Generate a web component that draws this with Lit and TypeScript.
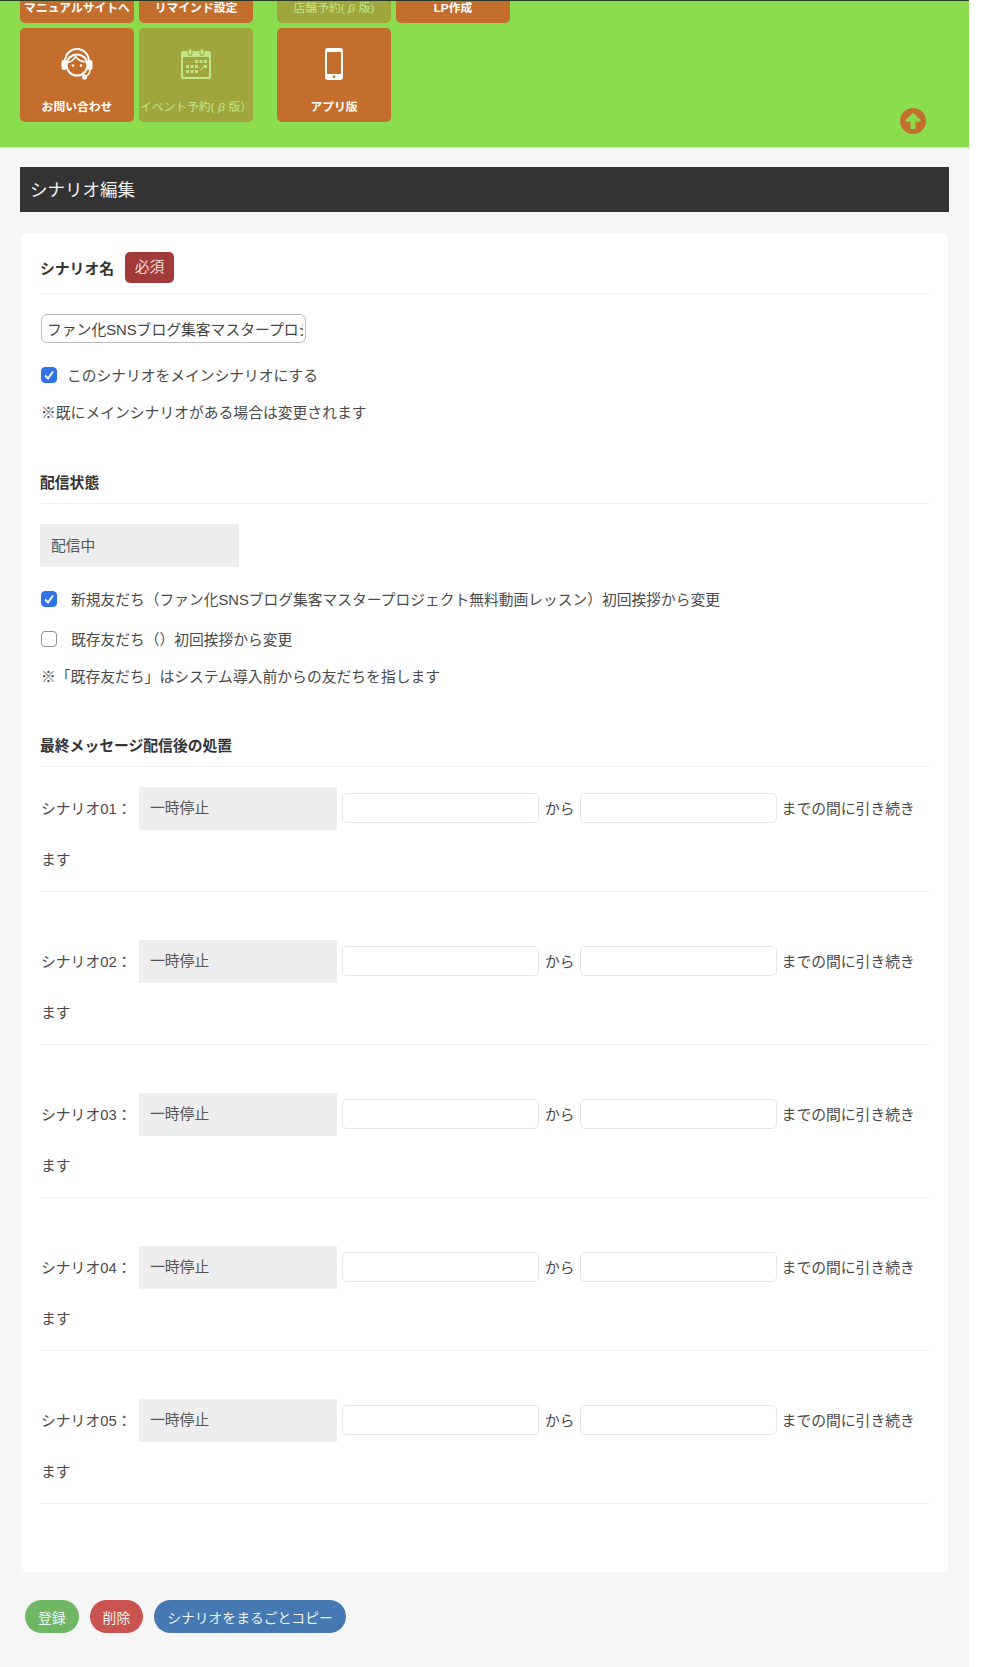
import { LitElement, html, css, svg } from "lit";
import { customElement } from "lit/decorators.js";

const headset = html`<svg class="ic" width="33" height="32" viewBox="0 0 33 32" fill="none" stroke="currentColor">
  <path d="M4.5 14 C4.5 6 10 1 16.5 1 S28.5 6 28.5 14" stroke-width="2"/>
  <circle cx="16.5" cy="17" r="10.5" stroke-width="2"/>
  <path d="M7.5 14.5 C11 13.5 13.5 11.5 15 8.5 C17 11.5 21 13.5 25.5 14" stroke-width="1.6"/>
  <rect x="1" y="12" width="5" height="10" rx="2.2" fill="currentColor" stroke="none"/>
  <rect x="27" y="12" width="5" height="10" rx="2.2" fill="currentColor" stroke="none"/>
  <circle cx="12.5" cy="17.5" r="1.2" fill="currentColor" stroke="none"/>
  <circle cx="20.5" cy="17.5" r="1.2" fill="currentColor" stroke="none"/>
  <path d="M29.5 22 C29 26 27 28 24 29" stroke-width="1.6"/>
  <circle cx="24" cy="29" r="2.6" fill="currentColor" stroke="none"/>
</svg>`;

const cells: [number, number][] = [
  [15, 12], [19.5, 12], [24, 12],
  [6, 17], [10.5, 17], [15, 17], [24, 17],
  [6, 22], [10.5, 22], [15, 22],
];
const calendar = html`<svg class="ic" width="32" height="32" viewBox="0 0 32 32">
  <path fill="currentColor" fill-rule="evenodd" d="M3 3 H28 Q31 3 31 6 V29 Q31 31 28 31 H3 Q1 31 1 29 V6 Q1 3 3 3 Z M3 9 V28 Q3 29 4 29 H28 Q29 29 29 28 V9 Z"/>
  <rect x="8" y="0.5" width="4" height="7" rx="2" fill="currentColor" stroke="#a0a53c"/>
  <rect x="20" y="0.5" width="4" height="7" rx="2" fill="currentColor" stroke="#a0a53c"/>
  ${cells.map(([x, y]) => svg`<rect x=${x} y=${y} width="3" height="3" fill="currentColor"/>`)}
  <path d="M19.5 19 L21 20.5 L24 16" transform="translate(0 1.5)" fill="none" stroke="currentColor" stroke-width="1"/>
</svg>`;

const phone = html`<svg class="ic" width="18" height="32" viewBox="0 0 18 32">
  <path fill="currentColor" fill-rule="evenodd" d="M3 0 H15 Q18 0 18 3 V29 Q18 32 15 32 H3 Q0 32 0 29 V3 Q0 0 3 0 Z M2 4 V26 H16 V4 Z M9 27.3 A1.3 1.3 0 1 0 9 30 A1.3 1.3 0 1 0 9 27.3 Z"/>
</svg>`;

type Tile = { label: unknown; off?: boolean; icon?: unknown };
const groupA: Tile[] = [
  { label: "マニュアルサイトへ" },
  { label: "リマインド設定" },
  { label: "お問い合わせ", icon: headset },
  { label: html`イベント予約(<i>β</i>版）`, off: true, icon: calendar },
];
const groupB: Tile[] = [
  { label: html`店舗予約(<i>β</i>版)`, off: true },
  { label: "LP作成" },
  { label: "アプリ版", icon: phone },
];

@customElement("app-root")
export class AppRoot extends LitElement {
  static styles = css`
    :host {
      display: block;
      width: 969px;
      background: #f6f6f7;
      font-family: "Liberation Sans", "Noto Sans CJK JP", sans-serif;
      font-size: 14.8px;
      color: #4a4a4a;
      height: 1667px;
      overflow: hidden;
    }
    * { box-sizing: border-box; }
    .top {
      position: relative;
      height: 147px;
      background: #8bdd4d;
      border-top: 1px solid #2a3a22;
      box-shadow: 0 1px 1px #d8e8cc;
      overflow: hidden;
      display: flex;
      align-items: flex-end;
      padding: 0 0 25px 20px;
      gap: 24px;
    }
    .group {
      display: grid;
      grid-template-columns: 114px 114px;
      grid-auto-rows: 94px;
      gap: 5px;
    }
    .tile {
      display: flex;
      flex-direction: column;
      align-items: center;
      justify-content: flex-end;
      position: relative;
      background: #c46e2e;
      color: #fff;
      border-radius: 5px;
      font-size: 11.8px;
      font-weight: bold;
      line-height: 16px;
      padding-bottom: 7px;
      white-space: nowrap;
      overflow: hidden;
    }
    .tile.off {
      background: #a0a53c;
      color: #bfe78a;
      font-weight: normal;
    }
    .tile i {
      display: inline-block;
      width: 14px;
      text-align: center;
    }
    .tile .ic {
      position: absolute;
      top: 20px;
      left: 50%;
      transform: translateX(-50%);
    }
    .up {
      position: absolute;
      left: 900px;
      top: 107px;
    }
    main { padding: 20px 20px 0; }
    h1 {
      margin: 0;
      height: 45px;
      background: #333;
      color: #f2f2f2;
      font-size: 17.5px;
      font-weight: normal;
      line-height: 47px;
      padding-left: 10px;
    }
    .card {
      margin: 21px 1px 0;
      height: 1339px;
      background: #fff;
      border-radius: 5px;
      box-shadow: 0 0 2px rgba(0, 0, 0, 0.06);
      padding: 0 19px;
    }
    .head {
      border-bottom: 1px solid #efefef;
      font-weight: bold;
      color: #333;
      line-height: 20px;
      padding-bottom: 10px;
    }
    .head.first {
      display: flex;
      align-items: center;
      padding-top: 19px;
    }
    .head.first .title { margin-top: 2px; }
    .sec2 { margin-top: 48px; }
    .sec3 { margin-top: 47px; }
    .badge {
      margin-left: 11px;
      width: 49px;
      height: 31px;
      line-height: 31px;
      text-align: center;
      background: #a33a3a;
      color: #f6dcdc;
      border-radius: 5px;
      font-weight: normal;
    }
    .name {
      display: block;
      margin: 20px 0 20px 1px;
      width: 265px;
      height: 29px;
      border: 1px solid #b9b9b9;
      border-radius: 6px;
      padding: 0 2px 0 5px;
      font: inherit;
      color: #444;
      background: #fff;
      outline: none;
    }
    .check {
      display: flex;
      align-items: center;
      height: 24px;
      padding-left: 1px;
    }
    .check input {
      appearance: none;
      margin: 0;
      width: 16px;
      height: 16px;
      flex: none;
      border: 1px solid #8f8f8f;
      border-radius: 4px;
      background: #fff center / 12px 12px no-repeat;
    }
    .check input:checked {
      border-color: #2f73e6;
      background-color: #2f73e6;
      background-image: url("data:image/svg+xml,%3Csvg xmlns='http://www.w3.org/2000/svg' viewBox='0 0 12 12'%3E%3Cpath d='M2 6.5 L5 9.5 L10 2.5' fill='none' stroke='white' stroke-width='2'/%3E%3C/svg%3E");
    }
    .check span { margin: 0 0 2px 14px; white-space: nowrap; font-size: 14.75px; }
    .check.tight span { margin-left: 10px; }
    .note { height: 24px; line-height: 24px; padding-left: 1px; white-space: nowrap; }
    .note.a { margin-top: 14px; }
    .note.b { margin-top: 14px; }
    .state {
      appearance: none;
      display: block;
      margin: 20px 0 20px;
      width: 199px;
      height: 43px;
      border: 0;
      border-radius: 0;
      background: #eeeeee;
      color: #555;
      font: inherit;
      padding: 0 11px;
      opacity: 1;
    }
    .gap16 { margin-top: 16px; }
    .rule {
      padding: 45px 0 5px 1px;
      line-height: 51px;
      border-bottom: 1px solid #efefef;
    }
    .rule.first { padding-top: 17px; }
    .rule .lab { display: inline-block; width: 98px; white-space: nowrap; }
    .rule select {
      appearance: none;
      display: inline-block;
      vertical-align: middle;
      width: 198px;
      height: 43px;
      margin-bottom: 4px;
      border: 0;
      border-radius: 0;
      background: #eeeeee;
      color: #555;
      font: inherit;
      line-height: 43px;
      padding: 0 11px;
      opacity: 1;
    }
    .rule input {
      display: inline-block;
      vertical-align: middle;
      width: 197px;
      height: 30px;
      border: 1px solid #e6e6e6;
      border-radius: 5px;
      background: #fff;
      margin: 0 5px 4px;
      outline: none;
    }
    .rule .kara { margin-left: 1px; margin-right: 0; }
    .actions {
      display: flex;
      gap: 11px;
      margin: 28px 0 0 5px;
    }
    .btn {
      appearance: none;
      border: 0;
      height: 33px;
      border-radius: 17px;
      padding: 0 13px;
      font: inherit;
      font-size: 13.8px;
      color: #eef3ee;
      white-space: nowrap;
    }
    .ok { background: #6fb765; }
    .del { background: #c9544f; }
    .copy { background: #4679b4; }
  `;

  private tile(t: Tile) {
    return html`<div class="tile ${t.off ? "off" : ""}">${t.icon ?? ""}<span>${t.label}</span></div>`;
  }

  private rule(n: number) {
    return html`<div class="rule ${n === 1 ? "first" : ""}"><span class="lab">シナリオ0${n}：</span><select disabled><option>一時停止</option></select><input type="text" /><span class="kara">から</span><input type="text" /><span>までの間に引き続き</span><br /><span>ます</span></div>`;
  }

  render() {
    return html`
      <header class="top">
        <div class="group">${groupA.map((t) => this.tile(t))}</div>
        <div class="group">${groupB.map((t) => this.tile(t))}</div>
        <svg class="up" width="26" height="26" viewBox="0 0 26 26">
          <circle cx="13" cy="13" r="13" fill="#c46e2e" />
          <path d="M13 4.5 L21 12.5 L17.5 14.5 L15.5 12.5 V21 H10.5 V12.5 L8.5 14.5 L5 12.5 Z" fill="#8bdd4d" />
        </svg>
      </header>
      <main>
        <h1>シナリオ編集</h1>
        <section class="card">
          <div class="head first"><span class="title">シナリオ名</span><span class="badge">必須</span></div>
          <input class="name" type="text" value="ファン化SNSブログ集客マスタープロジェクト無料動画レッスン" />
          <label class="check tight"><input type="checkbox" checked /><span>このシナリオをメインシナリオにする</span></label>
          <div class="note a">※既にメインシナリオがある場合は変更されます</div>

          <div class="head sec2">配信状態</div>
          <select class="state" disabled><option>配信中</option></select>
          <label class="check"><input type="checkbox" checked /><span>新規友だち（ファン化SNSブログ集客マスタープロジェクト無料動画レッスン）初回挨拶から変更</span></label>
          <label class="check gap16"><input type="checkbox" /><span>既存友だち（）初回挨拶から変更</span></label>
          <div class="note b">※「既存友だち」はシステム導入前からの友だちを指します</div>

          <div class="head sec3">最終メッセージ配信後の処置</div>
          ${[1, 2, 3, 4, 5].map((n) => this.rule(n))}
        </section>
        <div class="actions">
          <button class="btn ok">登録</button>
          <button class="btn del">削除</button>
          <button class="btn copy">シナリオをまるごとコピー</button>
        </div>
      </main>
    `;
  }
}
